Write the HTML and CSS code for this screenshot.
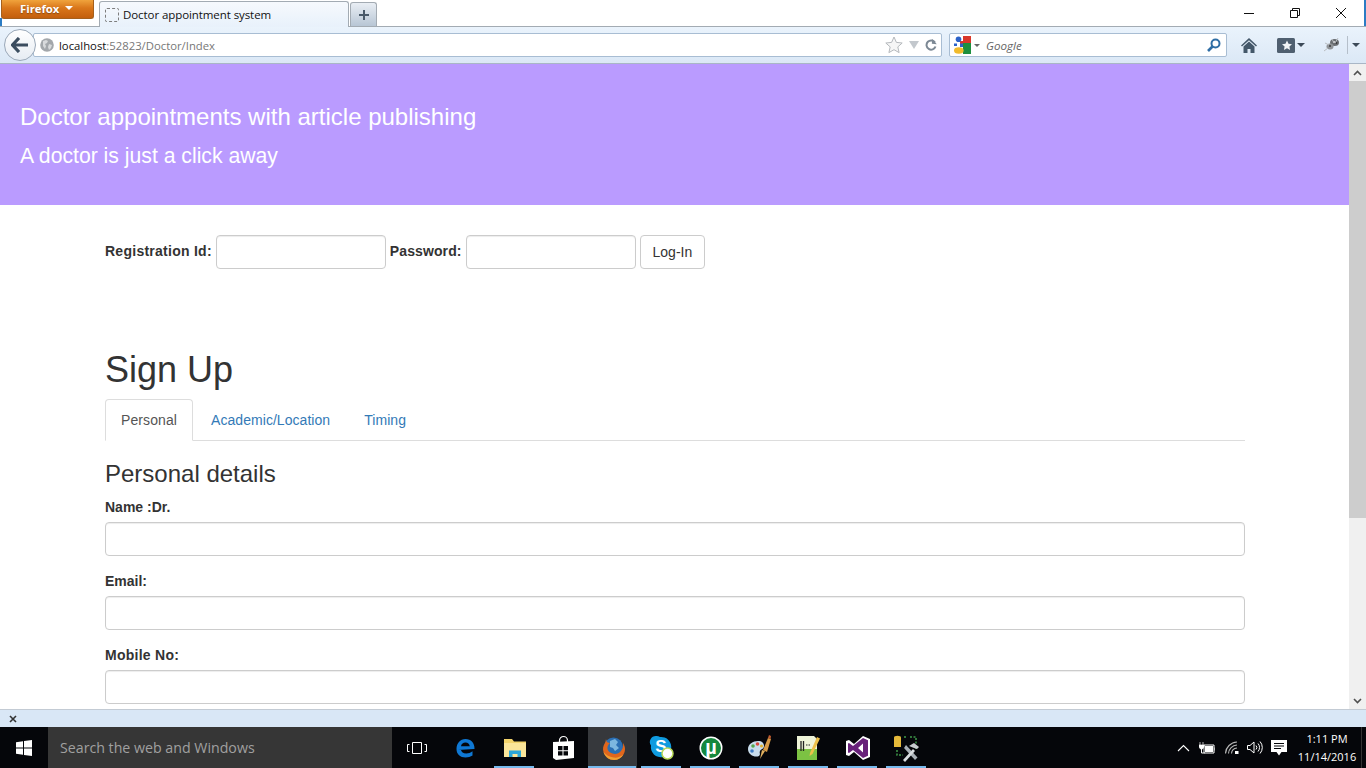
FILE: index.html
```html
<!DOCTYPE html>
<html lang="en">
<head>
  <meta charset="UTF-8">
  <title>Doctor appointment system</title>
  <link rel="stylesheet" href="styles.css">
</head>
<body>

  <!-- Tabs strip -->
  <div class="tab-strip">
    <div class="ff-button">Firefox <span class="ff-caret"></span></div>
    <div class="tab">
      <span class="tab-favicon"></span>
      <span class="tab-title">Doctor appointment system</span>
    </div>
    <div class="new-tab">
      <svg width="12" height="12" viewBox="0 0 12 12"><path d="M6 1v10M1 6h10" stroke="#4a5a6a" stroke-width="2"/></svg>
    </div>
    <div class="window-controls">
      <span class="win-btn"><svg width="12" height="12" viewBox="0 0 12 12"><path d="M1 6.5h10" stroke="#111" stroke-width="1"/></svg></span>
      <span class="win-btn"><svg width="12" height="12" viewBox="0 0 12 12"><path d="M1.5 3.5h7v7h-7zM3.5 3.5v-2h7v7h-2" fill="none" stroke="#111"/></svg></span>
      <span class="win-btn"><svg width="12" height="12" viewBox="0 0 12 12"><path d="M1 1l10 10M11 1L1 11" stroke="#111" stroke-width="1"/></svg></span>
    </div>
  </div>

  <!-- Nav toolbar -->
  <div class="nav-bar">
    <div class="back-btn">
      <svg width="18" height="16" viewBox="0 0 18 16"><path d="M8 1L1.5 8 8 15M2 8h15" fill="none" stroke="#3b4d5f" stroke-width="3.2"/></svg>
    </div>
    <div class="url-box">
      <svg class="globe" width="14" height="14" viewBox="0 0 14 14"><circle cx="7" cy="7" r="6.8" fill="#a3a7ab"/><path d="M3 3l3-1 2 1-1 2-2 1 1 2-1 3-2-3zM9 6l3 1-1 3-2 2-1-3z" fill="#d8dadc"/></svg>
      <span class="url-text"><span class="url-host">localhost</span>:52823/Doctor/Index</span>
      <svg class="star" width="18" height="18" viewBox="0 0 18 18"><path d="M9 1l2.4 5.4 5.8.6-4.4 3.900 1.300 5.700L9 13.700l-5.100 2.900 1.300-5.700L.8 7l5.800-.6z" fill="#f6f6f6" stroke="#b4b8bc"/></svg>
      <svg class="drop" width="10" height="8" viewBox="0 0 10 8"><path d="M0 0h10L5 8z" fill="#c3c8cd"/></svg>
      <svg class="reload" width="12" height="12" viewBox="0 0 12 12"><path d="M10 3.500A4.600 4.600 0 1 0 10.500 7.500" fill="none" stroke="#7c8894" stroke-width="2"/><path d="M7 0v5h5z" fill="#7c8894" transform="rotate(6 9 3)"/></svg>
    </div>
    <div class="search-box">
      <svg width="17" height="18" viewBox="0 0 17 18"><path d="M6 0h11v8H6z" fill="#d9372a"/><path d="M9 7h8v11H9z" fill="#1d8f3e"/><path d="M6 0h3v5H6z" fill="#fff"/><circle cx="4.500" cy="3.200" r="2.800" fill="#2a62c9"/><path d="M0 7.500h3v2.500H0zM6 7.500h3V11H6z" fill="#2a62c9"/><ellipse cx="4.800" cy="14.500" rx="4.800" ry="3.300" fill="#f1bb2c"/></svg>
      <span class="search-caret"></span>
      <span class="search-hint">Google</span>
      <svg class="lens" width="14" height="14" viewBox="0 0 14 14"><circle cx="8.500" cy="5.500" r="4" fill="none" stroke="#2f6ea5" stroke-width="2"/><path d="M5.500 8.500L1 13" stroke="#2f6ea5" stroke-width="2.600"/></svg>
    </div>
    <div class="nav-tools">
      <svg class="home" width="16" height="15" viewBox="0 0 16 15"><path d="M8 0L0 7.500l1 1L8 2.200l7 6.300 1-1z" fill="#44586a"/><path d="M2.500 8.500L8 3.500l5.500 5V15H9.500v-4h-3v4h-4z" fill="#44586a"/></svg>
      <svg class="bookmarks" width="18" height="15" viewBox="0 0 18 15"><rect width="18" height="15" rx="1.500" fill="#4f5f70"/><path d="M10 2.500l1.500 3.300 3.500.4-2.600 2.400.7 3.500L10 10.300l-3.100 1.800.7-3.500L5 6.200l3.500-.4z" fill="#f2f4f6"/></svg>
      <span class="tool-caret caret-a"></span>
      <svg class="addon" width="16" height="14" viewBox="0 0 16 14"><ellipse cx="10.500" cy="4.500" rx="4.500" ry="3.500" fill="#6a6e72"/><ellipse cx="6" cy="8.500" rx="3.500" ry="3" fill="#8f9397"/><circle cx="10" cy="4" r="1" fill="#e8e8e8"/><circle cx="12.500" cy="5" r=".8" fill="#222"/><circle cx="6" cy="8" r=".9" fill="#333"/><path d="M0 13l4-3M8 1l2 4M14 0l-3 5M1 5l4 2" stroke="#b8bcc0"/></svg>
      <span class="tool-sep"></span>
      <span class="tool-caret caret-b"></span>
    </div>
  </div>

  <!-- Page + scrollbar -->
  <div class="viewport">
    <div class="page">
      <div class="banner">
        <h3>Doctor appointments with article publishing</h3>
        <h4>A doctor is just a click away</h4>
      </div>

      <div class="container">
        <form class="login-row">
          <label class="label-wide">Registration Id:</label>
          <input type="text" class="form-control login-input">
          <label class="label-pass">Password:</label>
          <input type="password" class="form-control login-input">
          <button type="button" class="btn-login">Log-In</button>
        </form>

        <h2 class="signup-title">Sign Up</h2>

        <ul class="nav-tabs">
          <li class="active"><a href="#">Personal</a></li>
          <li><a href="#">Academic/Location</a></li>
          <li><a href="#">Timing</a></li>
        </ul>

        <h3 class="section-title">Personal details</h3>

        <div class="form-group">
          <label>Name :Dr.</label>
          <input type="text" class="form-control">
        </div>
        <div class="form-group">
          <label>Email:</label>
          <input type="text" class="form-control">
        </div>
        <div class="form-group">
          <label class="label-wide">Mobile No:</label>
          <input type="text" class="form-control">
        </div>
      </div>
    </div>

    <div class="scrollbar">
      <span class="scroll-btn"><svg width="9" height="6" viewBox="0 0 9 6"><path d="M1 5l3.500-3.500L8 5" fill="none" stroke="#505050" stroke-width="1.600"/></svg></span>
      <div class="scroll-track"><div class="scroll-thumb"></div></div>
      <span class="scroll-btn"><svg width="9" height="6" viewBox="0 0 9 6"><path d="M1 1l3.500 3.500L8 1" fill="none" stroke="#505050" stroke-width="1.600"/></svg></span>
    </div>
  </div>

  <!-- Add-on bar -->
  <div class="addon-bar">
    <svg width="8" height="8" viewBox="0 0 8 8"><path d="M1 1l6 6M7 1L1 7" stroke="#333" stroke-width="1.600"/></svg>
  </div>

  <!-- Windows taskbar -->
  <div class="taskbar">
    <div class="start">
      <svg width="16" height="16" viewBox="0 0 16 16"><path d="M0 2.300l7-1V7.600H0zM8 1.100L16 0v7.600H8zM0 8.400h7v6.300l-7-1zM8 8.400h8V16l-8-1.100z" fill="#fff"/></svg>
    </div>
    <div class="task-search">Search the web and Windows</div>
    <div class="task-item">
      <svg width="20" height="14" viewBox="0 0 20 14"><path d="M5.500 1.500h9v11h-9z" fill="none" stroke="#fff"/><path d="M2.500 3.500H.5v7h2M17.500 3.500h2v7h-2" fill="none" stroke="#fff"/></svg>
    </div>
    <div class="task-item">
      <svg width="22" height="22" viewBox="0 0 22 22"><path d="M3 12h16.500C19.800 6 16 2 10.500 2 5 2 1.500 6.500 1.500 12c0 5.500 4 8.500 9 8.500 2.800 0 5-.8 7-2v-4.200c-2 1.500-4 2.200-6.200 2.200-3 0-5-1.600-5.300-3.500h13" fill="#0f78d4"/><path d="M6 9.200c.4-2.400 2.200-3.700 4.500-3.700 2.300 0 4 1.400 4.300 3.700z" fill="#05060a"/></svg>
    </div>
    <div class="task-item pinned">
      <svg width="22" height="20" viewBox="0 0 22 20"><path d="M0 1h8l2 2.500h12V19H0z" fill="#f3d36b"/><path d="M0 5h22v14H0z" fill="#fbe59a"/><path d="M5 19v-6.500h12V19h-3.500v-3h-5v3z" fill="#2ba7d9"/></svg>
    </div>
    <div class="task-item">
      <svg width="21" height="24" viewBox="0 0 21 24"><path d="M6.500 6V4.500a4 4 0 0 1 8 0V6" fill="none" stroke="#fff" stroke-width="1.200"/><path d="M0 6l21-1v17L3 24 0 22z" fill="#fff"/><path d="M5 10h4.500v4.300H5zM10.500 10H15v4.300h-4.500zM5 15.300h4.500v4.300H5zM10.500 15.300H15v4.300h-4.500z" fill="#05060a"/></svg>
    </div>
    <div class="task-item active">
      <svg width="24" height="24" viewBox="0 0 24 24"><circle cx="12.500" cy="11" r="9.500" fill="#2a6fb4"/><path d="M9 5l5-2 3 3-2 3 3 3-4 3-2-3-3-1z" fill="#7cb7e0"/><path d="M5 3c-.3 2-.5 3-1 4-2 3-2.500 6-1.500 9C4 21 8 24 13 24c6 0 11-5 11-11 0-2.500-1-4.500-2-6 .5 3-.3 6-2 8-2 2.500-5.500 3.500-8.500 2.500C8 16.500 6 14 6.500 11 6.700 9.500 8 8 9 7 7 7 5 6 5 3z" fill="#e0661d"/><path d="M2.500 16c1.500 4.500 5.500 8 10.500 8 4 0 7.500-2 9.500-5.500-3 2.500-6.500 3.500-10 3-4-.5-7.500-2.500-10-5.500z" fill="#f0a033"/></svg>
    </div>
    <div class="task-item pinned">
      <svg width="26" height="26" viewBox="0 0 26 26"><path d="M7 1a6 6 0 0 0-5 9.500A10 10 0 0 0 14 22a6 6 0 0 0 8-8A10 10 0 0 0 11 2 6 6 0 0 0 7 1z" fill="#0f9be0"/><text x="12" y="17" class="skype-s">S</text><circle cx="18.500" cy="18.500" r="5.500" fill="#fff" stroke="#b7d857" stroke-width="1.500"/></svg>
    </div>
    <div class="task-item pinned">
      <svg width="24" height="24" viewBox="0 0 24 24"><circle cx="12" cy="12" r="11.500" fill="#fff"/><circle cx="12" cy="12" r="10" fill="#15883e"/><text x="12" y="18" class="torrent-mu">µ</text></svg>
    </div>
    <div class="task-item pinned paint">
      <svg width="25" height="26" viewBox="0 0 25 26"><path d="M1 14c0-5 5-8 10-8 4 0 6 2 6 5 0 3-3 3-4 5s1 3-1 5c-4 2-11-1-11-7z" fill="#c8dcec"/><circle cx="6" cy="11" r="1.800" fill="#55a84c"/><circle cx="10.500" cy="9" r="1.800" fill="#d84a3e"/><circle cx="5" cy="16" r="1.800" fill="#3f7cc5"/><circle cx="14.500" cy="11" r="1.500" fill="#e0b22a"/><path d="M13 24l2-9 3 1z" fill="#e0b060"/><path d="M16 15L21 3l3 1-4 13z" fill="#d79a45"/><path d="M21 3l1-3 2 1-.5 3z" fill="#c25c30"/></svg>
    </div>
    <div class="task-item pinned">
      <svg width="23" height="25" viewBox="0 0 23 25"><path d="M0 1h17l3 3v21H0z" fill="#eef3d8"/><path d="M0 14h20v11H0z" fill="#7cc243"/><path d="M4 6v10M6.500 6v10" stroke="#222" stroke-width="1.300"/><path d="M9 10h5" stroke="#222" stroke-dasharray="1.500 1"/><path d="M13 18l7-16 3 1.500L15.500 19l-3 2z" fill="#ecc04a"/></svg>
    </div>
    <div class="task-item pinned">
      <svg width="24" height="24" viewBox="0 0 24 24"><path d="M17 0l7 3v18l-7 3-9-8-5 4-3-1V5l3-1 5 4z" fill="#fff"/><path d="M17 2l5 2.200v15.600L17 22l-10-8-4 3-1-.5v-9l1-.5 4 3zM17 7.500l-5 4.500 5 4.500z" fill="#68217a"/></svg>
    </div>
    <div class="task-item pinned">
      <svg width="26" height="26" viewBox="0 0 26 26"><path d="M0 2.500A3.500 1.800 0 0 1 7 2.500V12H0z" fill="#e6b93a"/><path d="M10 2h3M16 2h6v7M22 12v3M3 15v5h6" fill="none" stroke="#3f9b4a" stroke-width="1.500" stroke-dasharray="2 1.500"/><path d="M10 13l11 12 2.500-2.500L12 10z" fill="#a9b0b6"/><path d="M9 25l10-11 2 2-10 11z" fill="#d9dde0"/><path d="M15 11l5-3 5 4-2 2-3-1z" fill="#c8ccd0"/></svg>
    </div>

    <div class="tray">
      <svg class="tray-caret" width="13" height="8" viewBox="0 0 13 8"><path d="M1 7l5.500-5.500L12 7" fill="none" stroke="#fff" stroke-width="1.100"/></svg>
      <svg class="tray-battery" width="16" height="12" viewBox="0 0 16 12"><path d="M5 3h10v8H5z" fill="none" stroke="#fff"/><path d="M6 4h8v6H6zM15.500 5.500h1v3h-1z" fill="#fff"/><path d="M1 0v3M4 0v3M0 3h5v2l-1.500 2h-2L0 5z" stroke="#fff" stroke-width=".7" fill="#fff"/><path d="M2.500 7v4h3" fill="none" stroke="#fff"/></svg>
      <svg width="14" height="13" viewBox="0 0 14 13"><path d="M.5 12.500A12 12 0 0 1 12 1M3.500 12.500A9 9 0 0 1 12 4M6.500 12.500A6 6 0 0 1 12 7" fill="none" stroke="#b8b8b8" stroke-width="1.100"/><rect x="10" y="10" width="3.500" height="3" fill="#fff"/></svg>
      <svg width="16" height="13" viewBox="0 0 16 13"><path d="M.5 4.500h2.500L7 1v11L3 8.500H.5z" fill="none" stroke="#fff"/><path d="M9 4.500a3 3 0 0 1 0 4M11 2.500a6 6 0 0 1 0 8M13 .5a9 9 0 0 1 0 12" fill="none" stroke="#fff"/></svg>
      <svg width="16" height="16" viewBox="0 0 16 16"><path d="M0 0h16v12h-5.500L8 15.500 5.500 12H0z" fill="#fff"/><path d="M3 3.500h10M3 6h10M3 8.500h7" stroke="#05060a"/></svg>
      <div class="clock"><span>1:11 PM</span><span>11/14/2016</span></div>
      <span class="show-desktop"></span>
    </div>
  </div>

</body>
</html>
```

FILE: styles.css
```css
* {
  box-sizing: border-box;
}

html,
body {
  height: 100%;
}

body {
  margin: 0;
  display: flex;
  flex-direction: column;
  height: 768px;
  overflow: hidden;
  font-family: "Liberation Sans", Arial, sans-serif;
  font-size: 14px;
  color: #333;
  background: #fff;
}

/* Tabs strip */
.tab-strip {
  position: relative;
  flex: none;
  display: flex;
  align-items: flex-start;
  height: 27px;
  background: #fff;
  border-bottom: 1px solid #a3abb3;
}

.tab-strip::before {
  content: "";
  position: absolute;
  left: 0;
  top: 18px;
  bottom: 0;
  width: 2px;
  background: #2b7cc4;
}

.tab-strip::after {
  content: "";
  position: absolute;
  right: 0;
  top: 0;
  bottom: 0;
  width: 2px;
  background: #2b7cc4;
}

.ff-button {
  width: 93px;
  height: 19px;
  margin-left: 1px;
  display: flex;
  align-items: center;
  gap: 3px;
  padding: 0 0 2px 18px;
  background: linear-gradient(#f0a33c, #d9761a 45%, #c35f0d);
  border: 1px solid #a5601c;
  border-top: 0;
  border-radius: 0 0 3px 3px;
  color: #fff;
  font-family: "Open Sans", sans-serif;
  font-size: 11.3px;
  font-weight: 700;
  text-shadow: 0 1px 1px #8a4a10;
}

.ff-caret {
  width: 0;
  height: 0;
  margin-left: 3px;
  border-left: 4px solid transparent;
  border-right: 4px solid transparent;
  border-top: 4px solid #fff;
}

.tab {
  width: 250px;
  height: 26px;
  margin: 1px 0 -1px 5px;
  display: flex;
  align-items: center;
  padding: 0 5px 0 5px;
  gap: 4px;
  background: linear-gradient(#f6f9fd, #e8f1fb);
  border: 1px solid #a3abb3;
  border-bottom: 0;
  border-radius: 3px 3px 0 0;
}

.tab-favicon {
  width: 14px;
  height: 14px;
  border: 1px dashed #7d7d7d;
  border-radius: 2px;
}

.tab-title {
  font-family: "Open Sans", sans-serif;
  font-size: 11.5px;
  letter-spacing: -.08px;
  color: #111;
}

.new-tab {
  width: 27px;
  height: 24px;
  margin: 2px 0 0 1px;
  display: flex;
  align-items: center;
  justify-content: center;
  background: linear-gradient(#e9eef4, #b8c6d5);
  border: 1px solid #a3abb3;
  border-bottom: 0;
  border-radius: 3px 3px 0 0;
}

.window-controls {
  margin-left: auto;
  margin-right: 2px;
  display: flex;
}

.win-btn {
  width: 46px;
  height: 26px;
  display: flex;
  align-items: center;
  justify-content: center;
  padding-bottom: 1px;
}

/* Nav toolbar */
.nav-bar {
  flex: none;
  display: flex;
  align-items: center;
  height: 37px;
  padding-left: 4px;
  background: linear-gradient(#eaf3fc, #dbe8f6);
  border-bottom: 1px solid #a9b6c6;
}

.back-btn {
  position: relative;
  z-index: 1;
  flex: none;
  width: 32px;
  height: 32px;
  display: flex;
  align-items: center;
  justify-content: center;
  background: linear-gradient(#fff, #e6ecf3);
  border: 1px solid #9aa8b8;
  border-radius: 50%;
}

.url-box,
.search-box {
  flex: none;
  display: flex;
  align-items: center;
  height: 24px;
  background: #fff;
  border: 1px solid #a8bdd3;
  border-radius: 2px;
}

.url-box {
  width: 909px;
  margin-left: -3px;
  padding-left: 6px;
}

.globe {
  flex: none;
}

.url-text {
  margin-left: 5px;
  font-family: "Open Sans", sans-serif;
  font-size: 11.3px;
  color: #777;
}

.url-host {
  color: #111;
}

.star {
  margin-left: auto;
}

.drop {
  margin-left: 6px;
}

.reload {
  margin: 0 4px 0 6px;
}

.search-box {
  width: 278px;
  margin-left: 7px;
  padding: 0 3px 0 4px;
}

.search-caret {
  width: 0;
  height: 0;
  margin-left: 3px;
  border-left: 3px solid transparent;
  border-right: 3px solid transparent;
  border-top: 3px solid #666;
}

.search-hint {
  margin-left: 6px;
  font-family: "Open Sans", sans-serif;
  font-size: 11.6px;
  font-style: italic;
  color: #666;
}

.lens {
  margin-left: auto;
  margin-right: 2px;
}

.nav-tools {
  flex: none;
  display: flex;
  align-items: center;
  padding-left: 14px;
}

.bookmarks {
  margin-left: 20px;
}

.tool-caret {
  width: 0;
  height: 0;
  border-left: 4px solid transparent;
  border-right: 4px solid transparent;
  border-top: 4px solid #3c4a58;
}

.caret-a {
  margin-left: 2px;
}

.addon {
  margin-left: 19px;
}

.tool-sep {
  width: 1px;
  height: 18px;
  margin-left: 7px;
  background: #b5bfca;
}

.caret-b {
  margin-left: 4px;
}

/* Page */
.viewport {
  flex: none;
  display: flex;
  height: 645px;
  overflow: hidden;
}

.page {
  flex: 1;
  min-width: 0;
  overflow: hidden;
}

.banner {
  height: 141px;
  padding: 37px 20px 0;
  background: #ba9bff;
  color: #fff;
}

.banner h3,
.banner h4 {
  margin: 0;
  font-weight: 400;
}

.banner h3 {
  font-size: 24px;
  line-height: 32px;
}

.banner h4 {
  margin-top: 8px;
  font-size: 21.2px;
  line-height: 30px;
}

.container {
  width: 1170px;
  margin-left: 90px;
  padding: 30px 15px 0;
}

label {
  display: block;
  margin-bottom: 5px;
  font-weight: 700;
  line-height: 20px;
}

.label-wide {
  letter-spacing: .26px;
}

.label-pass {
  letter-spacing: .1px;
}

.form-control {
  display: block;
  width: 100%;
  height: 34px;
  padding: 6px 12px;
  font: inherit;
  background: #fff;
  border: 1px solid #ccc;
  border-radius: 4px;
  box-shadow: inset 0 1px 1px rgba(0, 0, 0, .075);
}

.login-row {
  display: flex;
  align-items: flex-start;
  gap: 4px;
}

.login-row label {
  margin: 6px 0 0;
}

.login-input {
  width: 170px;
}

.btn-login {
  height: 34px;
  padding: 6px 12px;
  font: inherit;
  color: #333;
  background: #fff;
  border: 1px solid #ccc;
  border-radius: 4px;
}

.signup-title {
  margin: 81px 0 9px;
  font-size: 36px;
  font-weight: 500;
  line-height: 40px;
}

.nav-tabs {
  display: flex;
  margin: 0;
  padding: 0;
  list-style: none;
  border-bottom: 1px solid #ddd;
}

.nav-tabs li {
  margin-bottom: -1px;
}

.nav-tabs a {
  display: block;
  margin-right: 2px;
  padding: 10px 15px;
  line-height: 20px;
  letter-spacing: .05px;
  color: #337ab7;
  text-decoration: none;
  border: 1px solid transparent;
  border-radius: 4px 4px 0 0;
}

.nav-tabs .active a {
  letter-spacing: .1px;
  color: #555;
  background: #fff;
  border-color: #ddd #ddd #fff;
}

.section-title {
  margin: 20px 0 10px;
  font-size: 24px;
  font-weight: 500;
  line-height: 26px;
}

.form-group {
  margin-bottom: 15px;
}

/* Scrollbar */
.scrollbar {
  flex: none;
  display: flex;
  flex-direction: column;
  width: 17px;
  background: #f0f0f0;
}

.scroll-btn {
  flex: none;
  height: 17px;
  display: flex;
  align-items: center;
  justify-content: center;
}

.scroll-track {
  flex: 1;
}

.scroll-thumb {
  height: 437px;
  background: #cdcdcd;
}

/* Add-on bar */
.addon-bar {
  flex: none;
  display: flex;
  align-items: center;
  height: 18px;
  padding-left: 9px;
  background: #d9e7f6;
  border-top: 1px solid #c3cbd4;
}

/* Taskbar */
.taskbar {
  flex: none;
  display: flex;
  align-items: center;
  height: 41px;
  background: #05060a;
}

.start {
  flex: none;
  width: 48px;
  height: 100%;
  display: flex;
  align-items: center;
  justify-content: center;
}

.task-search {
  flex: none;
  width: 344px;
  height: 100%;
  display: flex;
  align-items: center;
  padding-left: 12px;
  background: #363636;
  color: #a0a0a0;
  font-family: "Open Sans", sans-serif;
  font-size: 14.2px;
}

.task-item {
  position: relative;
  flex: none;
  width: 49px;
  height: 100%;
  display: flex;
  align-items: center;
  justify-content: center;
}

.task-item svg {
  overflow: visible;
}

.task-item.active {
  background: #36383c;
}

.task-item.pinned::after,
.task-item.active::after {
  content: "";
  position: absolute;
  bottom: 0;
  left: 4px;
  right: 5px;
  height: 2px;
  background: #76b9ed;
}

.task-item.active::after {
  left: 0;
  right: 1px;
}

.tray {
  flex: 1;
  display: flex;
  align-items: center;
  justify-content: flex-end;
  gap: 8px;
  color: #fff;
}

.tray-caret {
  margin-right: 1px;
}

.tray-battery {
  margin-right: 2px;
}

.clock {
  display: flex;
  flex-direction: column;
  align-items: center;
  width: 62px;
  margin-left: 1px;
  font-family: "Open Sans", sans-serif;
  font-size: 11px;
  line-height: 18px;
}

.show-desktop {
  width: 1px;
  height: 41px;
  margin-left: -5px;
  margin-right: 4px;
  background: #333;
}

/* Logo letters */
.skype-s {
  font-family: "Liberation Sans", sans-serif;
  font-size: 17px;
  font-weight: 700;
  fill: #fff;
  text-anchor: middle;
}

.torrent-mu {
  font-family: "Liberation Sans", sans-serif;
  font-size: 20px;
  font-weight: 700;
  fill: #fff;
  text-anchor: middle;
}
```
